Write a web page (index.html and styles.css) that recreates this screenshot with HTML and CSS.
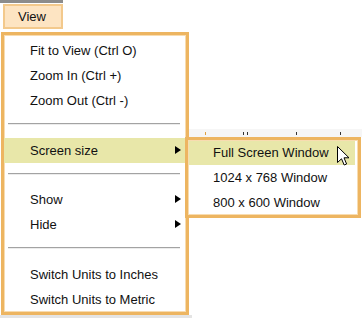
FILE: index.html
```html
<!DOCTYPE html>
<html>
<head>
<meta charset="utf-8">
<link rel="stylesheet" href="styles.css">
</head>
<body>
<div class="page">
  <div class="menubar">
    <div class="view-btn">View</div>
  </div>
  <div class="ruler">
    <span class="tick t1"></span><span class="tick t2"></span><span class="tick t3"></span><span class="tick t4"></span><span class="tick t5"></span>
  </div>
  <div class="bottom-strip"></div>
  <div class="menu">
    <div class="item">Fit to View (Ctrl O)</div>
    <div class="item">Zoom In (Ctrl +)</div>
    <div class="item">Zoom Out (Ctrl -)</div>
    <div class="sep"></div>
    <div class="item active has-sub">Screen size<span class="arrow"></span></div>
    <div class="sep"></div>
    <div class="item has-sub">Show<span class="arrow"></span></div>
    <div class="item has-sub">Hide<span class="arrow"></span></div>
    <div class="sep"></div>
    <div class="item">Switch Units to Inches</div>
    <div class="item">Switch Units to Metric</div>
  </div>
  <div class="submenu">
    <div class="sitem active">Full Screen Window</div>
    <div class="sitem">1024 x 768 Window</div>
    <div class="sitem">800 x 600 Window</div>
  </div>
  <svg class="cursor" width="13" height="20" viewBox="0 0 13 20">
    <path d="M0.5 0.5 L0.5 16.5 L4.5 12.8 L7.2 19 L9.6 18 L7 11.8 L12 11.8 Z" fill="#fff" stroke="#000" stroke-width="1" stroke-linejoin="miter"/>
  </svg>
</div>
</body>
</html>
```
FILE: styles.css
```css
html, body {
  margin: 0;
  padding: 0;
  background: #fff;
}
body {
  width: 362px;
  height: 318px;
  overflow: hidden;
  font-family: "Liberation Sans", Arial, sans-serif;
  font-size: 13px;
  color: #111;
}
.page {
  position: relative;
  width: 362px;
  height: 318px;
}
.menubar {
  width: 63px;
  height: 30px;
  border-top: 3px solid #8c8c8c;
  box-sizing: border-box;
  padding: 1px 0 0 3px;
}
.view-btn {
  width: 60px;
  height: 25px;
  box-sizing: border-box;
  border: 2px solid #f3c98c;
  background: #fde4c2;
  display: flex;
  align-items: center;
  justify-content: center;
  font-size: 13px;
  padding-right: 2px;
}
.ruler {
  position: absolute;
  left: 189px;
  top: 129px;
  width: 173px;
  height: 8px;
  background: #f6f6f6;
}
.tick {
  position: absolute;
  top: 3px;
  width: 1px;
  height: 3px;
  background: #333;
}
.t1 { left: 16px; background: #e0a040; }
.t2 { left: 54px; }
.t3 { left: 58px; }
.t4 { left: 107px; }
.t5 { left: 151px; }
.bottom-strip {
  position: absolute;
  left: 0;
  top: 315px;
  width: 192px;
  height: 3px;
  background: #e4e4e4;
}
.menu {
  position: absolute;
  left: 1px;
  top: 32px;
  width: 188px;
  height: 283px;
  box-sizing: border-box;
  border: 3px solid #edb561;
  box-shadow: inset 0 0 0 1px #f8dcb0;
  background: #fff;
  padding-top: 3px;
  display: flex;
  flex-direction: column;
}
.item {
  position: relative;
  height: 25px;
  line-height: 25px;
  padding-left: 26px;
  white-space: nowrap;
}
.item.active {
  background: #e8e7a9;
}
.arrow {
  position: absolute;
  left: 171px;
  top: 8px;
  width: 0;
  height: 0;
  border-top: 4px solid transparent;
  border-bottom: 4px solid transparent;
  border-left: 6px solid #000;
}
.sep {
  height: 25px;
  box-sizing: border-box;
  padding: 10px 6px 0 4px;
}
.sep::before {
  content: "";
  display: block;
  height: 1px;
  background: #a3a3a3;
  border-bottom: 1px solid #ececec;
}
.submenu {
  position: absolute;
  left: 185px;
  top: 137px;
  width: 176px;
  height: 81px;
  box-sizing: border-box;
  border: 3px solid #edb561;
  box-shadow: inset 0 0 0 1px #f8dcb0;
  background: #fff;
  display: flex;
  flex-direction: column;
}
.sitem {
  height: 25px;
  line-height: 25px;
  padding-left: 25px;
  white-space: nowrap;
}
.sitem.active {
  background: #e8e7a9;
  margin: 1px 3px 0 1px;
  height: 24px;
  line-height: 24px;
  padding-left: 24px;
}
.cursor {
  position: absolute;
  left: 337px;
  top: 146px;
}
```
